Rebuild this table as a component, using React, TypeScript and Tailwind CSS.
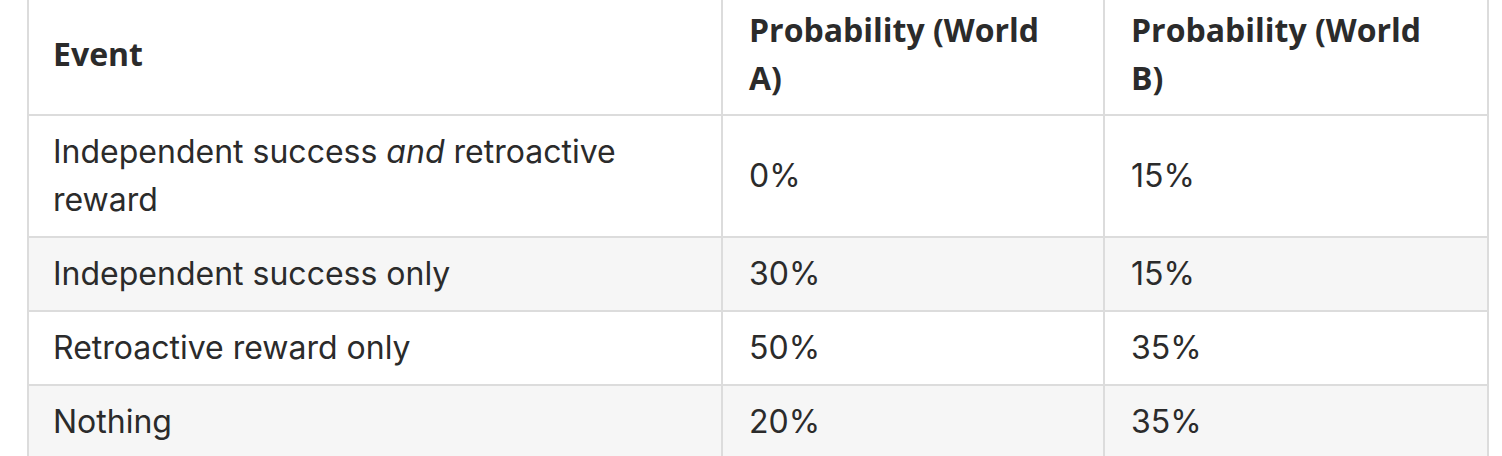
import React from 'react';

// Markdown-style comparison table (rendered at 2x scale).
const ROWS: { event: React.ReactNode; a: string; b: string }[] = [
  {
    event: (
      <>
        Independent success <em>and</em> retroactive reward
      </>
    ),
    a: '0%',
    b: '15%',
  },
  { event: 'Independent success only', a: '30%', b: '15%' },
  { event: 'Retroactive reward only', a: '50%', b: '35%' },
  { event: 'Nothing', a: '20%', b: '35%' },
];

const th = "border-2 border-[#dcdcdc] py-[12px] text-left font-['Open_Sans',sans-serif] font-bold";

export default function App() {
  return (
    <div className="h-[456px] w-[1502px] overflow-hidden bg-white pl-[27px] font-['Inter',sans-serif] text-[#2b2b2b]">
      <table className="-mt-[8px] w-[1460px] table-fixed border-collapse text-[32px] leading-[48px]">
        <colgroup>
          <col className="w-[694px]" />
          <col className="w-[382px]" />
          <col className="w-[384px]" />
        </colgroup>
        <thead>
          <tr className="bg-white">
            <th className={`${th} px-[24px]`}>Event</th>
            <th className={`${th} px-[26px]`}>Probability (World A)</th>
            <th className={`${th} px-[26px]`}>Probability (World B)</th>
          </tr>
        </thead>
        <tbody>
          {ROWS.map((r, i) => (
            <tr key={i} className={i % 2 === 1 ? 'bg-[#f6f6f6]' : 'bg-white'}>
              <td className="border-2 border-[#dcdcdc] px-[24px] py-[12px]">{r.event}</td>
              <td className="border-2 border-[#dcdcdc] px-[26px] py-[12px]">{r.a}</td>
              <td className="border-2 border-[#dcdcdc] px-[26px] py-[12px]">{r.b}</td>
            </tr>
          ))}
        </tbody>
      </table>
    </div>
  );
}
